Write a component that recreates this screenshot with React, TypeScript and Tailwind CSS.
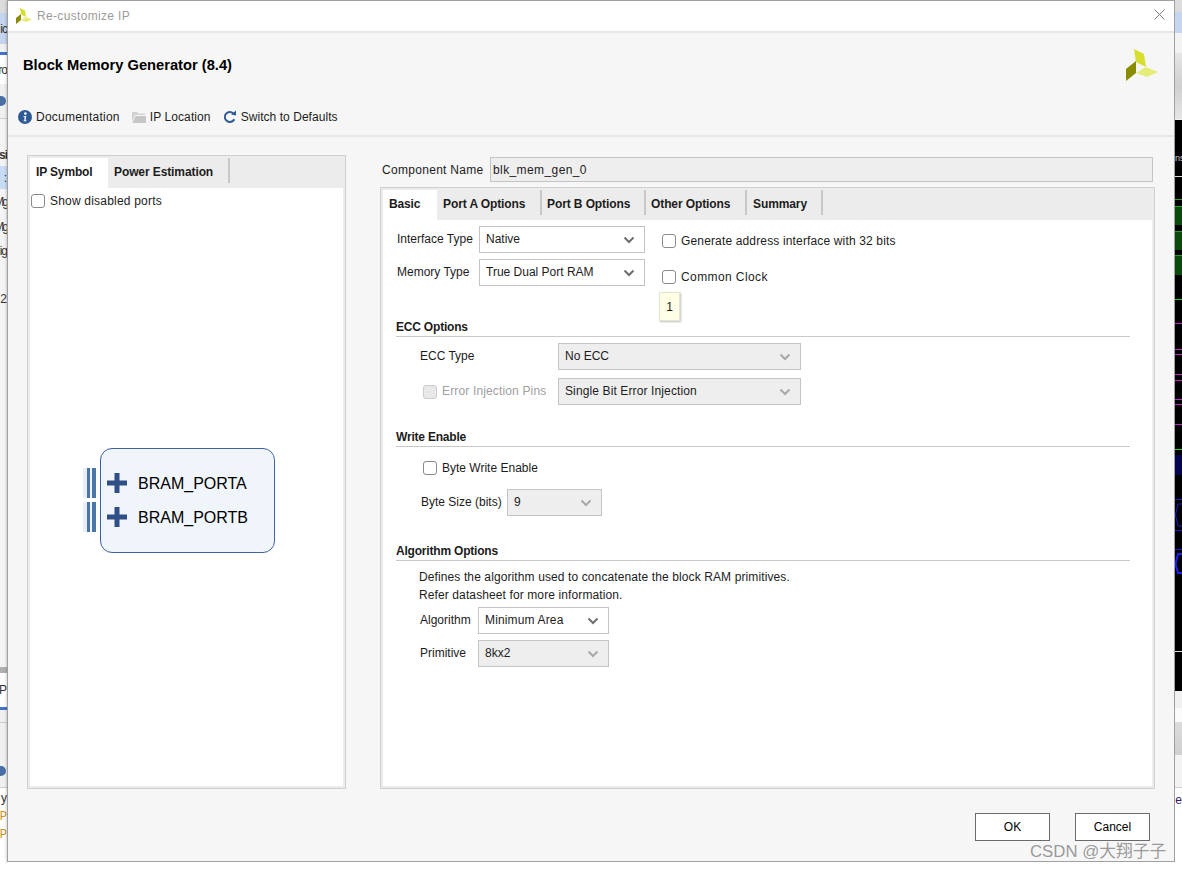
import React from "react";

const bands = "font-['Liberation_Sans',sans-serif]";

function XLogo({ size }: { size: number }) {
  return (
    <svg width={size} height={size} viewBox="0 0 32 32">
      <polygon points="8,0 18,5 20,18 10,13" fill="#d6de2e" />
      <polygon points="10,24 20,18 32,23 21,28" fill="#e6ec78" />
      <polygon points="0,20 10,12 10,24 0,32" fill="#8a8c00" />
    </svg>
  );
}

function Chevron({ off }: { off?: boolean }) {
  return (
    <svg width="12" height="8" viewBox="0 0 12 8" className="shrink-0">
      <path d="M1.5 1.5 L6 6 L10.5 1.5" fill="none" stroke={off ? "#a8a8a8" : "#6e6e6e"} strokeWidth="2" />
    </svg>
  );
}

function Select({ value, w, off, track }: { value: string; w: string; off?: boolean; track?: string }) {
  return (
    <div className={`${w} h-[27px] border border-[#c4c4c4] ${off ? "bg-[#eeeeee]" : "bg-white"} flex items-center justify-between pl-[6px] pr-[9px] text-[12px] text-[#1c1c1c]`}>
      <span className={`-mt-[1px] ${track ?? ""}`}>{value}</span>
      <Chevron off={off} />
    </div>
  );
}

function Check({ off }: { off?: boolean }) {
  return (
    <div className={`w-[14px] h-[14px] rounded-[3px] border-[1.5px] shrink-0 ${off ? "border-[#cccccc] bg-[#e8e8e8]" : "border-[#8a8a8a] bg-white"}`} />
  );
}

function Heading({ children, mt }: { children: string; mt: string }) {
  return (
    <div className={`${mt} ml-[13px] w-[734px] h-[18px] border-b border-[#c9c9c9] text-[12px] leading-[16px] tracking-[-0.2px] font-bold text-[#1c1c1c]`}>
      {children}
    </div>
  );
}

function Bus() {
  return (
    <div className="flex h-[30px]">
      <div className="w-[4px] bg-[#e8eef7]" />
      <div className="w-[3px] bg-[#4a76a8]" />
      <div className="w-[2px] bg-[#f2f5fa]" />
      <div className="w-[4px] bg-[#4a76a8]" />
      <div className="w-[4px] bg-white" />
    </div>
  );
}

function Port({ name }: { name: string }) {
  return (
    <div className="flex items-center h-[30px] pl-[6px] gap-[11px]">
      <svg width="20" height="20" viewBox="0 0 20 20">
        <path d="M0 7.5 H7.5 V0 H12.5 V7.5 H20 V12.5 H12.5 V20 H7.5 V12.5 H0 Z" fill="#2f4f87" />
      </svg>
      <span className="mt-[2px] text-[16px] text-black">{name}</span>
    </div>
  );
}

function Tab({ label, w, pl, active }: { label: string; w: string; pl: string; active?: boolean }) {
  if (active) {
    return (
      <div className={`${w} ${pl} h-[30px] pb-[2px] bg-white flex items-center text-[12px] font-bold tracking-[-0.15px] text-[#1c1c1c]`}>{label}</div>
    );
  }
  return (
    <div className={`${w} ${pl} h-[25px] pt-[3px] border-r-2 border-[#c8c8c8] flex items-center text-[12px] font-bold tracking-[-0.1px] text-[#1c1c1c]`}>{label}</div>
  );
}

function Label({ children, w }: { children: string; w: string }) {
  return <span className={`${w} -mt-[2px]`}>{children}</span>;
}

function LeftStrip() {
  const t = "text-[12px] leading-none text-[#333333] whitespace-nowrap flex justify-end items-center overflow-hidden";
  return (
    <div className="h-[869px] flex flex-col overflow-hidden bg-[#f4f4f4]">
      <div className="h-[13px] bg-[#dcdcdc]" />
      <div className={`h-[31px] bg-[#c5d5ef] ${t} tracking-[-1px]`}>ic</div>
      <div className="h-[8px] bg-[#f0f0f0]" />
      <div className="h-[3px] bg-[#4472c4]" />
      <div className={`h-[29px] bg-white ${t} tracking-[-1px]`}>ro</div>
      <div className="h-[34px] bg-[#f0f0f0] flex items-center">
        <div className="w-[6px] h-[10px] rounded-r-full bg-[#4a6fa5]" />
      </div>
      <div className="h-[1px] bg-[#cfcfcf]" />
      <div className="h-[25px] bg-[#f4f4f4]" />
      <div className={`h-[22px] font-bold ${t} tracking-[-1px]`}>si</div>
      <div className={`h-[23px] bg-[#c9dcf5] ${t}`}>:</div>
      <div className={`h-[25px] ${t} tracking-[-2px]`}>Mg</div>
      <div className={`h-[25px] ${t} tracking-[-2px]`}>Mg</div>
      <div className={`h-[24px] text-[#8a8a8a] ${t} tracking-[-1px]`}>ig</div>
      <div className="h-[24px]" />
      <div className={`h-[24px] ${t}`}>2</div>
      <div className="h-[356px] bg-[#f4f4f4]" />
      <div className="h-[6px] bg-[#b0b0b0]" />
      <div className={`h-[34px] bg-white ${t}`}>P</div>
      <div className="h-[3px] bg-[#4472c4]" />
      <div className="h-[12px] bg-[#f0f0f0]" />
      <div className="h-[1px] bg-[#cfcfcf]" />
      <div className="h-[42px] bg-[#f0f0f0]" />
      <div className="h-[12px] bg-[#f0f0f0] flex items-center">
        <div className="w-[6px] h-[10px] rounded-r-full bg-[#4a6fa5]" />
      </div>
      <div className="h-[10px] bg-[#f0f0f0]" />
      <div className="h-[1px] bg-[#cfcfcf]" />
      <div className={`h-[20px] bg-white ${t}`}>y</div>
      <div className={`h-[18px] bg-white font-['Liberation_Mono',monospace] ${t} !text-[#c8901e]`}>P</div>
      <div className={`h-[18px] bg-white font-['Liberation_Mono',monospace] ${t} !text-[#c8901e]`}>P</div>
      <div className="flex-1 bg-white" />
    </div>
  );
}

function RightStrip() {
  const lines = (
    <>
      <div className="h-[33px] shrink-0" />
      <div className="h-[10px] shrink-0 flex items-center text-[9px] leading-none text-[#d0d0d0] overflow-hidden">ns</div>
      <div className="h-[13px] shrink-0" />
      <div className="h-[1px] shrink-0 bg-[#dddddd]" />
      <div className="h-[22px] shrink-0" />
      <div className="h-[1px] shrink-0 bg-[#22a322]" />
      <div className="h-[6px] shrink-0" />
      <div className="h-[19px] shrink-0 bg-[#0a4a0a] border-t border-[#25a025]" />
      <div className="h-[6px] shrink-0" />
      <div className="h-[19px] shrink-0 bg-[#0a4a0a] border-t border-[#25a025]" />
      <div className="h-[5px] shrink-0" />
      <div className="h-[20px] shrink-0 bg-[#0a4a0a] border-t border-[#25a025]" />
      <div className="h-[24px] shrink-0" />
      <div className="h-[1px] shrink-0 bg-[#1fd11f]" />
      <div className="h-[23px] shrink-0" />
      <div className="h-[1px] shrink-0 bg-[#c71fc7]" />
      <div className="h-[25px] shrink-0" />
      <div className="h-[1px] shrink-0 bg-[#c71fc7]" />
      <div className="h-[4px] shrink-0" />
      <div className="h-[1px] shrink-0 bg-[#c71fc7]" />
      <div className="h-[19px] shrink-0" />
      <div className="h-[1px] shrink-0 bg-[#c71fc7]" />
      <div className="h-[5px] shrink-0" />
      <div className="h-[1px] shrink-0 bg-[#c71fc7]" />
      <div className="h-[18px] shrink-0" />
      <div className="h-[1px] shrink-0 bg-[#c71fc7]" />
      <div className="h-[4px] shrink-0" />
      <div className="h-[1px] shrink-0 bg-[#c71fc7]" />
      <div className="h-[19px] shrink-0" />
      <div className="h-[1px] shrink-0 bg-[#c71fc7]" />
      <div className="h-[24px] shrink-0" />
      <div className="h-[1px] shrink-0 bg-[#1fd11f]" />
      <div className="h-[5px] shrink-0" />
      <div className="h-[20px] shrink-0 bg-[#04044f]" />
      <div className="h-[24px] shrink-0" />
      <div className="h-[1px] shrink-0 bg-[#1a1ad0]" />
      <svg width="7" height="31" viewBox="0 0 7 31" className="shrink-0">
        <path d="M7 4 H3 L0.5 15 L3 26 H7" fill="none" stroke="#1a1ad0" strokeWidth="1" />
        <path d="M0 30.5 H7" stroke="#1a1ad0" strokeWidth="1" />
      </svg>
      <div className="h-[18px] shrink-0" />
      <div className="h-[1px] shrink-0 bg-[#1a1ad0]" />
      <svg width="7" height="24" viewBox="0 0 7 24" className="shrink-0">
        <path d="M7 4 H3 L0.5 14 L3 23 H7" fill="none" stroke="#2020ff" strokeWidth="2" />
      </svg>
      <div className="h-[77px] shrink-0" />
      <div className="h-[1px] shrink-0 bg-[#dddddd]" />
    </>
  );
  return (
    <div className="h-[869px] flex flex-col overflow-hidden bg-white">
      <div className="h-[12px] bg-[#dcdcdc]" />
      <div className="h-[21px] bg-[#c5d6f0]" />
      <div className="h-[20px] bg-[#f3f3f3]" />
      <div className="h-[66px] bg-gradient-to-b from-[#e6e6e6] via-[#cfcfcf] to-[#e6e6e6]" />
      <div className="h-[1px] bg-[#f3f3f3]" />
      <div className="h-[571px] shrink-0 bg-black flex flex-col overflow-hidden">{lines}</div>
      <div className="h-[17px] bg-[#f0f0f0]" />
      <div className="h-[14px] bg-[#fafafa]" />
      <div className="h-[33px] bg-gradient-to-b from-[#dddddd] to-[#cfcfcf]" />
      <div className="h-[32px] bg-[#f3f3f3]" />
      <div className="h-[1px] bg-[#cfcfcf]" />
      <div className="h-[26px] text-[12px] tracking-[-1px] flex items-center text-[#2a1a6a] overflow-hidden font-['Liberation_Mono',monospace]">el</div>
      <div className="flex-1 bg-white" />
    </div>
  );
}

export default function App() {
  return (
    <div className={`relative w-[1182px] h-[869px] overflow-hidden grid grid-cols-[7px_1168px_7px] ${bands} bg-white`}>
      <LeftStrip />

      <div className="flex flex-col h-[869px]">
        <div className="h-[862px] shrink-0 border border-[#a0a0a0] bg-[#f6f6f6] flex flex-col shadow-[0_1px_3px_rgba(0,0,0,0.3)]">
          {/* title bar */}
          <div className="h-[32px] shrink-0 bg-white border-b-2 border-[#e6e6e6] flex items-center justify-between pl-[8px] pr-[9px]">
            <div className="flex items-center gap-[5px] -mt-[1px]">
              <XLogo size={16} />
              <span className="text-[12px] tracking-[0.33px] text-[#9c9c9c]">Re-customize IP</span>
            </div>
            <svg width="11" height="11" viewBox="0 0 11 11" className="-mt-[4px]">
              <path d="M0.5 0.5 L10.5 10.5 M10.5 0.5 L0.5 10.5" stroke="#7a7a7a" strokeWidth="1" />
            </svg>
          </div>

          {/* header */}
          <div className="h-[104px] shrink-0 border-b-2 border-[#e6e6e6] pt-[16px]">
            <div className="h-[32px] flex items-center justify-between pl-[15px] pr-[16px]">
              <span className="text-[14.7px] font-bold text-black">Block Memory Generator (8.4)</span>
              <XLogo size={32} />
            </div>
            <div className="mt-[24px] h-[24px] flex items-center pl-[10px] text-[12px] text-[#1c1c1c]">
              <svg width="14" height="14" viewBox="0 0 14 14">
                <circle cx="7" cy="7" r="7" fill="#2f5a96" />
                <circle cx="7.4" cy="3.6" r="1.3" fill="white" />
                <path d="M5.4 6 H8.2 L7.6 10.4 H8.6 V11.2 H5.6 V10.4 H6.3 L6.6 6.8 H5.4 Z" fill="white" />
              </svg>
              <span className="ml-[4px] tracking-[0.23px]">Documentation</span>
              <svg width="14" height="12" viewBox="0 0 14 12" className="ml-[12px]">
                <path d="M0 1 H5 L6.5 2.5 H13 V4 H3 L0 11 Z" fill="#d2d2d2" />
                <path d="M3.5 5 H14 V12 H0.5 Z" fill="#c6c6c6" />
              </svg>
              <span className="ml-[4px] tracking-[0.1px]">IP Location</span>
              <svg width="14" height="14" viewBox="0 0 14 14" className="ml-[12px]">
                <path d="M11.3 9.2 A5 5 0 1 1 10.3 3.4" fill="none" stroke="#2f5a96" strokeWidth="2" />
                <path d="M8 4.4 L13 5.4 L13 0.4 Z" fill="#2f5a96" />
              </svg>
              <span className="ml-[4px] tracking-[0.05px]">Switch to Defaults</span>
            </div>
          </div>

          {/* main */}
          <div className="mt-[18px] px-[19px] flex gap-[34px] h-[634px] shrink-0">
            <div className="w-[319px] h-full border border-[#cfcfcf] bg-[#ececec] p-[2px] flex flex-col">
              <div className="h-[30px] shrink-0 flex items-start">
                <Tab label="IP Symbol" w="w-[78px]" pl="pl-[6px]" active />
                <Tab label="Power Estimation" w="w-[122px]" pl="pl-[6px]" />
              </div>
              <div className="flex-1 bg-white pt-[4px] pl-[1px]">
                <div className="flex items-center gap-[5px] text-[12px] text-[#1c1c1c]">
                  <Check />
                  <span className="tracking-[0.2px]">Show disabled ports</span>
                </div>
                <div className="mt-[238px] ml-[52px] flex">
                  <div className="pt-[20px] flex flex-col gap-[4px]">
                    <Bus />
                    <Bus />
                  </div>
                  <div className="w-[175px] h-[105px] rounded-[12px] border border-[#3f639f] bg-[#f0f4fb] pt-[19px] flex flex-col gap-[4px]">
                    <Port name="BRAM_PORTA" />
                    <Port name="BRAM_PORTB" />
                  </div>
                </div>
              </div>
            </div>

            <div className="w-[775px] h-full flex flex-col">
              <div className="h-[32px] shrink-0 pt-[2px] pl-[2px] pr-[2px] flex items-start text-[12px] text-[#1c1c1c]">
                <span className="w-[108px] h-[25px] flex items-center tracking-[0.3px]">Component Name</span>
                <div className="flex-1 h-[25px] border border-[#c4c4c4] bg-[#eeeeee] flex items-center pl-[2px] tracking-[0.4px]">blk_mem_gen_0</div>
              </div>
              <div className="flex-1 border border-[#cfcfcf] bg-[#ececec] p-[2px] flex flex-col">
                <div className="h-[30px] shrink-0 flex items-start">
                  <Tab label="Basic" w="w-[54px]" pl="pl-[6px]" active />
                  <Tab label="Port A Options" w="w-[105px]" pl="pl-[6px]" />
                  <Tab label="Port B Options" w="w-[104px]" pl="pl-[5px]" />
                  <Tab label="Other Options" w="w-[101px]" pl="pl-[5px]" />
                  <Tab label="Summary" w="w-[76px]" pl="pl-[6px]" />
                </div>

                <div className="flex-1 bg-white text-[12px] text-[#1c1c1c]">
                  {/* top block */}
                  <div className="relative pt-[6px] pl-[14px] flex">
                    <div className="flex flex-col gap-[6px]">
                      <div className="flex items-center">
                        <Label w="w-[82px]">Interface Type</Label>
                        <Select value="Native" w="w-[166px]" />
                      </div>
                      <div className="flex items-center">
                        <Label w="w-[82px]">Memory Type</Label>
                        <Select value="True Dual Port RAM" w="w-[166px]" />
                      </div>
                    </div>
                    <div className="ml-[17px] pt-[8px] flex flex-col gap-[22px]">
                      <div className="h-[14px] flex items-center gap-[5px]">
                        <Check />
                        <span className="tracking-[0.15px]">Generate address interface with 32 bits</span>
                      </div>
                      <div className="h-[14px] flex items-center gap-[5px]">
                        <Check />
                        <span className="tracking-[0.4px]">Common Clock</span>
                      </div>
                    </div>
                    {/* tooltip under the hovered checkbox */}
                    <div className="absolute left-[276px] top-[72px] w-[21px] h-[29px] bg-[#ffffe6] border border-[#e4e4d4] shadow-[1px_1px_2px_rgba(0,0,0,0.25)] flex items-center justify-center">
                      1
                    </div>
                  </div>

                  <Heading mt="mt-[33px]">ECC Options</Heading>
                  <div className="mt-[6px] pl-[37px] flex items-center">
                    <Label w="w-[138px]">ECC Type</Label>
                    <Select value="No ECC" w="w-[243px]" off />
                  </div>
                  <div className="mt-[8px] pl-[40px] flex items-center">
                    <Check off />
                    <span className="ml-[5px] -mt-[2px] w-[116px] tracking-[0.15px] text-[#a0a0a0]">Error Injection Pins</span>
                    <Select value="Single Bit Error Injection" w="w-[243px]" off track="tracking-[0.12px]" />
                  </div>

                  <Heading mt="mt-[24px]">Write Enable</Heading>
                  <div className="mt-[14px] h-[14px] pl-[40px] flex items-center gap-[5px]">
                    <Check />
                    <span>Byte Write Enable</span>
                  </div>
                  <div className="mt-[14px] pl-[38px] flex items-center">
                    <Label w="w-[86px]">Byte Size (bits)</Label>
                    <Select value="9" w="w-[95px]" off />
                  </div>

                  <Heading mt="mt-[27px]">Algorithm Options</Heading>
                  <div className="mt-[7px] pl-[36px] leading-[18px] tracking-[0.11px]">
                    <div>Defines the algorithm used to concatenate the block RAM primitives.</div>
                    <div>Refer datasheet for more information.</div>
                  </div>
                  <div className="mt-[3px] pl-[37px] flex items-center">
                    <Label w="w-[58px]">Algorithm</Label>
                    <Select value="Minimum Area" w="w-[131px]" track="tracking-[0.15px]" />
                  </div>
                  <div className="mt-[6px] pl-[37px] flex items-center">
                    <Label w="w-[58px]">Primitive</Label>
                    <Select value="8kx2" w="w-[131px]" off />
                  </div>
                </div>
              </div>
            </div>
          </div>

          {/* footer */}
          <div className="mt-[24px] pr-[24px] flex justify-end gap-[25px]">
            <button className="w-[75px] h-[28px] bg-white border border-[#6b6b6b] text-[12px] text-black">OK</button>
            <button className="w-[75px] h-[28px] bg-white border border-[#6b6b6b] text-[12px] text-black">Cancel</button>
          </div>
        </div>
        <div className="flex-1 bg-white" />
      </div>

      <RightStrip />

      {/* watermark on top of the screenshot */}
      <div className="absolute left-[1030px] top-[841px] text-[16.8px] leading-[22px] text-[#808080]/80 whitespace-nowrap font-['Liberation_Sans','Noto_Sans_CJK_SC',sans-serif]">
        CSDN @大翔子子
      </div>
    </div>
  );
}
